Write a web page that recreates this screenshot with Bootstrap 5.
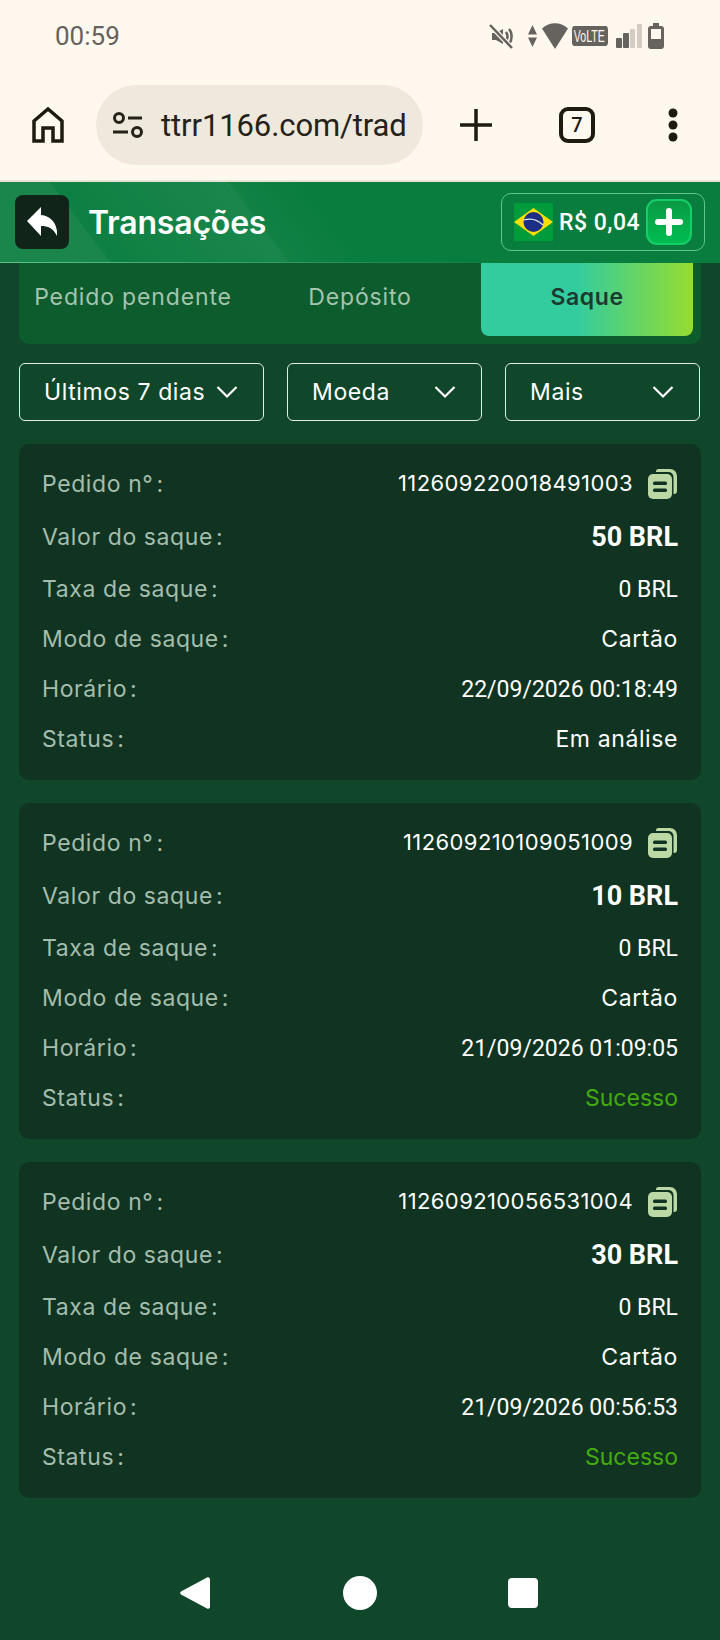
<!DOCTYPE html>
<html lang="pt-BR">
<head>
  <meta charset="UTF-8">
  <meta name="viewport" content="width=device-width, initial-scale=1.0">
  <title>Transações</title>
  <link href="https://cdn.jsdelivr.net/npm/bootstrap@5.3.0/dist/css/bootstrap.min.css" rel="stylesheet">
  <style>
    body {
      width: 720px;
      height: 1640px;
      background: #10472a;
      font-family: Inter, "Liberation Sans", sans-serif;
      overflow: hidden;
    }
    /* status bar + browser toolbar */
    .chrome-top { background: #fff8ef; height: 182px; border-bottom: 2px solid #e6e2d8; }
    .status-row { height: 72px; padding: 0 56px 0 55px; color: #66625d; }
    .status-time { font: 400 26px Roboto, sans-serif; }
    .icon-mute { margin-right: 15px; }
    .icon-wifi { margin: 0 4px 0 5px; }
    .icon-signal { margin: 0 6px 0 8px; }
    .tool-row { height: 108px; padding: 12px 0 14px 32px; }
    .url-pill {
      width: 327px; height: 80px; margin-left: 32px; margin-right: 37px;
      background: #efe8dc; border-radius: 40px; padding-left: 17px;
      color: #26221a; font: 400 31px Roboto, sans-serif; overflow: hidden; white-space: nowrap;
    }
    .url-pill span { color: #26221a; margin-left: 18px; letter-spacing: -.1px; }
    .tab-count {
      width: 36px; height: 36px; border: 4px solid #1f1b12; border-radius: 9px; margin-left: 67px; margin-right: 73px;
      font: 500 20px/28px Roboto, sans-serif; color: #1f1b12; text-align: center;
    }
    /* app header */
    .app-head {
      height: 81px; padding: 0 15px;
      border-bottom: 1px solid;
      border-image: linear-gradient(90deg, #5fc48c, #2f9a60 40%, #097d3e 70%) 1;
      background:
        linear-gradient(53deg, rgba(255,255,255,.07) 0, rgba(255,255,255,.07) 88px, rgba(255,255,255,.02) 88px, rgba(255,255,255,.07) 230px, rgba(255,255,255,.03) 231px, rgba(255,255,255,0) 290px),
        #097d3e;
    }
    .back-btn { width: 54px; height: 54px; background: #10241a; border-radius: 8px; }
    .head-title { color: #fff; font: 600 32px Inter, sans-serif; margin-left: 19px; letter-spacing: -.2px; }
    .balance-box {
      width: 204px; height: 58px; margin-left: auto; padding: 0 12px;
      border: 1px solid #60c68d; border-radius: 10px; color: #fff;
      font: 500 23px Roboto, sans-serif; letter-spacing: .5px;
    }
    .balance-box .flag-svg { margin-right: 6px; }
    .plus-btn {
      width: 46px; height: 46px; margin-left: auto;
      background: linear-gradient(180deg, #0a9a45, #00bd50); border: 2px solid #14cf68; border-radius: 11px;
    }
    /* tabs */
    .tab-panel { margin: 0 19px; height: 81px; padding: 0 8px; background: #0c5c2e; border-radius: 0 0 10px 10px; gap: 15px; }
    .tab-item { flex: 1; height: 73px; padding-top: 15px; text-align: center; font-size: 23px; letter-spacing: .85px; line-height: 38px; color: #a5c4ae; white-space: nowrap; }
    .tab-item.is-on {
      font-weight: 600; letter-spacing: .6px; color: #1a3a30; border-radius: 0 0 8px 8px;
      background: linear-gradient(90deg, #33cc9f 0, #33cc9f 45%, #96dc30 100%);
    }
    /* filter buttons */
    .filter-row { margin: 19px 19px 23px; gap: 23px; }
    .filter-btn {
      flex: 0 0 195px; height: 58px; padding: 0 25px 0 24px;
      border: 1px solid #e3ebe5; border-radius: 6px; color: #fff; font-size: 23px; letter-spacing: .6px; white-space: nowrap;
    }
    .filter-btn:first-child { flex-basis: 245px; }
    .filter-btn:hover { color: #fff; border-color: #e3ebe5; }
    /* records */
    .record-list { margin: 0 19px; gap: 23px; }
    .record-card { height: 336px; padding: 15px 23px 16px 23px; background: #103421; border: 0; border-radius: 10px; }
    .record-row { height: 50px; font-size: 23px; letter-spacing: .6px; color: #fff; white-space: nowrap; }
    .record-row.is-big { height: 56px; }
    .record-label { color: #a5bdac; }
    .record-label i { font-style: normal; margin-left: 3px; }
    .id-val { font-size: 22px; letter-spacing: .4px; }
    .num-val { font: 400 23px Roboto, sans-serif; letter-spacing: 0; }
    .big-val { font: 700 27px Roboto, sans-serif; letter-spacing: 0; }
    .ok-val { color: #43aa10; letter-spacing: 0; }
    .copy-svg { margin-left: 15px; }
    /* android nav */
    .nav-keys { margin-top: auto; height: 64px; padding: 0 0 31px 180px; }
    .key-home { margin-left: 133px; }
    .key-recent { margin-left: 131px; }
  </style>
</head>
<body class="d-flex flex-column">

<div class="chrome-top">
  <div class="status-row d-flex align-items-center justify-content-between">
    <span class="status-time">00:59</span>
    <div class="d-flex align-items-center">
      <svg class="icon-mute" width="24" height="25" viewBox="0 0 24 25" fill="none"><path d="M3 9h4l7-4v15l-7-4H3z" fill="#66625d"/><path d="M17 8c2 3 2 6 0 9M20 5c3.500 4 3.500 11 0 15" stroke="#66625d" stroke-width="2.500"/><path d="M1 1l22 23" stroke="#fff8ef" stroke-width="5"/><path d="M1 1l22 23" stroke="#66625d" stroke-width="2.500"/></svg>
      <svg width="9" height="22" viewBox="0 0 9 22"><path d="M4.500 0L9 9.500H0zM4.500 22L0 12.500h9z" fill="#66625d"/></svg>
      <svg class="icon-wifi" width="26" height="26" viewBox="0 0 26 26"><path d="M0 5.500c7.500-7 18.500-7 26 0L13 26z" fill="#66625d"/></svg>
      <!-- the chip's text is tall and narrow, so the whole box is squeezed sideways -->
      <svg width="36" height="20" viewBox="0 0 58 20" preserveAspectRatio="none"><rect width="58" height="20" rx="4" fill="#66625d"/><text x="3" y="16" font-family="Liberation Sans, sans-serif" font-size="17" fill="#fff8ef">VoLTE</text></svg>
      <svg class="icon-signal" width="26" height="24" viewBox="0 0 26 24"><rect x="0" y="14" width="6" height="10" rx="1" fill="#66625d"/><rect x="7" y="9" width="6" height="15" rx="1" fill="#66625d"/><rect x="14" y="5" width="5" height="19" rx="1" fill="#d3cdc5"/><rect x="21" y="0" width="5" height="24" rx="1" fill="#d3cdc5"/></svg>
      <svg width="16" height="26" viewBox="0 0 16 26"><path d="M5 0h6v3h2a3 3 0 0 1 3 3v17a3 3 0 0 1-3 3H3a3 3 0 0 1-3-3V6a3 3 0 0 1 3-3h2z" fill="#66625d"/><rect x="3" y="6" width="10" height="10" fill="#fff8ef"/></svg>
    </div>
  </div>
  <div class="tool-row d-flex align-items-center">
    <svg width="32" height="36" viewBox="0 0 32 36" fill="none"><path d="M2 34V14L16 2l14 12v20h-9V21H11v13z" stroke="#1f1b12" stroke-width="3.500"/></svg>
    <div class="url-pill d-flex align-items-center">
      <svg width="30" height="26" viewBox="0 0 30 26" fill="none"><circle cx="6" cy="6" r="4.500" stroke="#26221a" stroke-width="3"/><path d="M15 6h14M0 20h15" stroke="#26221a" stroke-width="3"/><circle cx="24" cy="20" r="4.500" stroke="#26221a" stroke-width="3"/></svg>
      <span>ttrr1166.com/trad</span>
    </div>
    <svg width="32" height="32" viewBox="0 0 32 32"><path d="M16 1v30M1 16h30" stroke="#1f1b12" stroke-width="3.500" stroke-linecap="round"/></svg>
    <div class="tab-count">7</div>
    <svg width="10" height="34" viewBox="0 0 10 34"><circle cx="5" cy="5" r="4.500" fill="#1f1b12"/><circle cx="5" cy="17" r="4.500" fill="#1f1b12"/><circle cx="5" cy="29" r="4.500" fill="#1f1b12"/></svg>
  </div>
</div>

<div class="app-head d-flex align-items-center">
  <div class="back-btn d-flex align-items-center justify-content-center">
    <svg width="30" height="30" viewBox="0 0 30 30"><path d="M0 14L14 0v8c11 1 17 10 16 21-4-8-9-10-16-10v10z" fill="#fff"/></svg>
  </div>
  <span class="head-title">Transações</span>
  <div class="balance-box d-flex align-items-center">
    <svg class="flag-svg" width="39" height="38" viewBox="0 0 39 38"><rect width="39" height="38" fill="#009b3a"/><path d="M0 19L19.500 5 39 19 19.500 33z" fill="#fedf00"/><circle cx="19.500" cy="19" r="10" fill="#1d2f85"/><path d="M10 17c7-2 14 0 19 5" stroke="#dfe6ef" stroke-width="1.200" fill="none"/></svg>
    <span>R$ 0,04</span>
    <div class="plus-btn d-flex align-items-center justify-content-center">
      <svg width="28" height="28" viewBox="0 0 28 28"><path d="M14 3v22M3 14h22" stroke="#fff" stroke-width="6" stroke-linecap="round"/></svg>
    </div>
  </div>
</div>

<div class="tab-panel d-flex">
  <div class="tab-item">Pedido pendente</div>
  <div class="tab-item">Depósito</div>
  <div class="tab-item is-on">Saque</div>
</div>

<div class="filter-row d-flex">
  <button class="btn filter-btn d-flex align-items-center justify-content-between" type="button">Últimos 7 dias
    <svg width="22" height="14" viewBox="0 0 22 14" fill="none"><path d="M1.500 2L11 11.500 20.500 2" stroke="#fff" stroke-width="2.200"/></svg></button>
  <button class="btn filter-btn d-flex align-items-center justify-content-between" type="button">Moeda
    <svg width="22" height="14" viewBox="0 0 22 14" fill="none"><path d="M1.500 2L11 11.500 20.500 2" stroke="#fff" stroke-width="2.200"/></svg></button>
  <button class="btn filter-btn d-flex align-items-center justify-content-between" type="button">Mais
    <svg width="22" height="14" viewBox="0 0 22 14" fill="none"><path d="M1.500 2L11 11.500 20.500 2" stroke="#fff" stroke-width="2.200"/></svg></button>
</div>

<div class="record-list d-flex flex-column" id="records"></div>

<div class="nav-keys d-flex align-items-center">
  <svg width="30" height="34" viewBox="0 0 30 34"><path d="M27 1.500a2 2 0 0 1 3 1.500v28a2 2 0 0 1-3 1.500L1 18.500a2 2 0 0 1 0-3z" fill="#fff"/></svg>
  <svg class="key-home" width="34" height="34" viewBox="0 0 34 34"><circle cx="17" cy="17" r="17" fill="#fff"/></svg>
  <svg class="key-recent" width="30" height="30" viewBox="0 0 30 30"><rect width="30" height="30" rx="4" fill="#fff"/></svg>
</div>

<script>
  const records = [
    { id: "112609220018491003", amount: "50 BRL", time: "22/09/2026 00:18:49", status: "Em análise", ok: false },
    { id: "112609210109051009", amount: "10 BRL", time: "21/09/2026 01:09:05", status: "Sucesso", ok: true },
    { id: "112609210056531004", amount: "30 BRL", time: "21/09/2026 00:56:53", status: "Sucesso", ok: true }
  ]
  const copyIcon = `<svg class="copy-svg" width="30" height="30" viewBox="0 0 30 30"><path d="M8 2.500a2.500 2.500 0 0 1 2.500-2.500H22a7 7 0 0 1 7 7v15a3 3 0 0 1-3 3h-.500V8a5 5 0 0 0-5-5H8z" fill="#bcd8a4"/><rect x="0" y="5" width="24" height="25" rx="5" fill="#bcd8a4"/><rect x="5" y="12.500" width="14" height="3.500" rx="1.500" fill="#103421"/><rect x="5" y="19.500" width="14" height="3.500" rx="1.500" fill="#103421"/></svg>`
  document.getElementById("records").innerHTML = records.map(r => `
    <div class="card record-card">
      <div class="record-row d-flex align-items-center justify-content-between"><span class="record-label">Pedido n°<i>:</i></span><span class="id-val d-flex align-items-center">${r.id}${copyIcon}</span></div>
      <div class="record-row is-big d-flex align-items-center justify-content-between"><span class="record-label">Valor do saque<i>:</i></span><span class="big-val">${r.amount}</span></div>
      <div class="record-row d-flex align-items-center justify-content-between"><span class="record-label">Taxa de saque<i>:</i></span><span class="num-val">0 BRL</span></div>
      <div class="record-row d-flex align-items-center justify-content-between"><span class="record-label">Modo de saque<i>:</i></span><span>Cartão</span></div>
      <div class="record-row d-flex align-items-center justify-content-between"><span class="record-label">Horário<i>:</i></span><span class="num-val">${r.time}</span></div>
      <div class="record-row d-flex align-items-center justify-content-between"><span class="record-label">Status<i>:</i></span><span class="${r.ok ? "ok-val" : ""}">${r.status}</span></div>
    </div>`).join("")
</script>
<script src="https://cdn.jsdelivr.net/npm/bootstrap@5.3.0/dist/js/bootstrap.bundle.min.js"></script>
</body>
</html>
